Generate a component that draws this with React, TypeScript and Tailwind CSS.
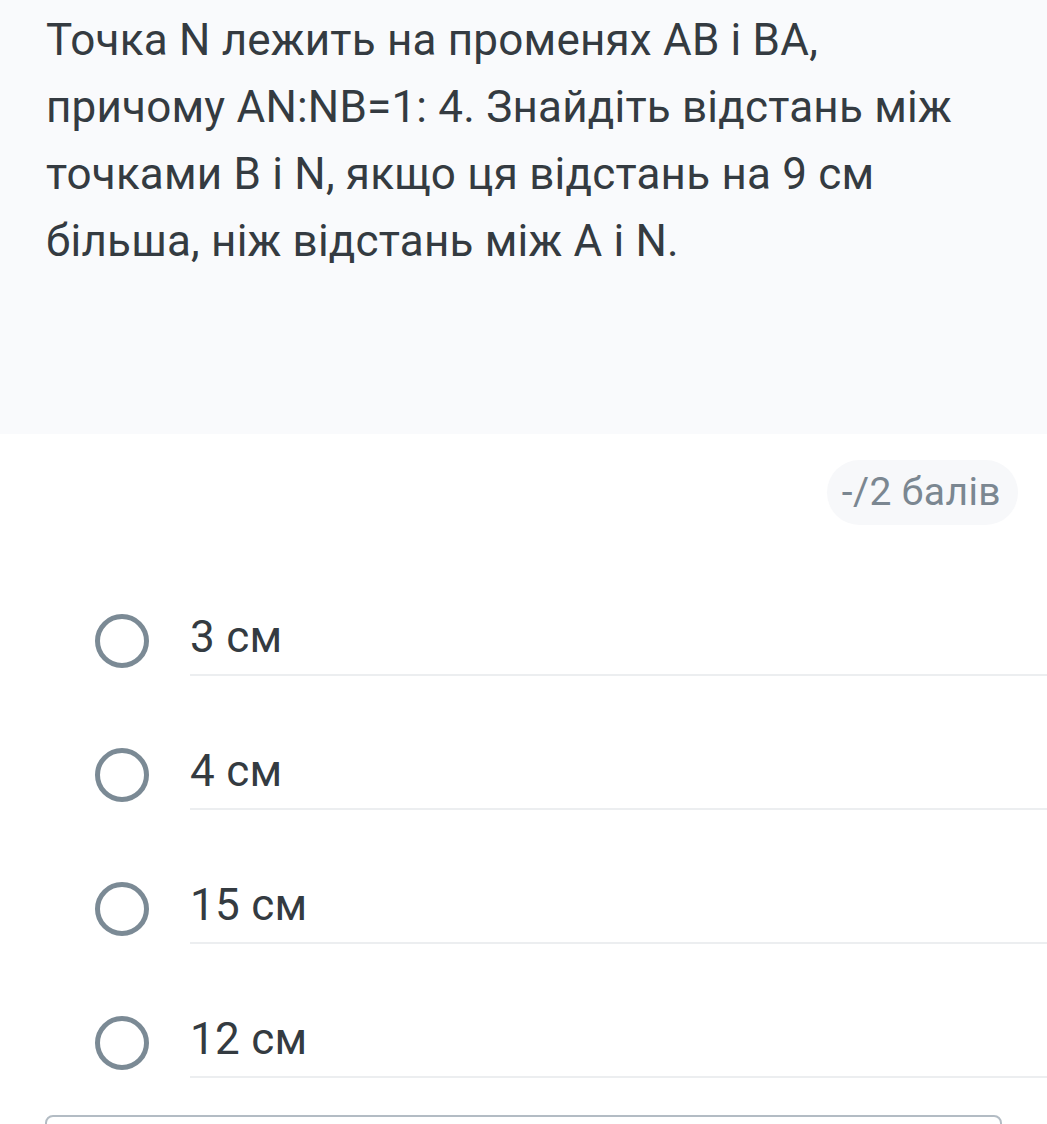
const options = ['3 см', '4 см', '15 см', '12 см'];

function Radio() {
  return (
    <span className="mb-[8px] ml-[95px] block h-[54px] w-[54px] shrink-0 rounded-full border-[5px] border-[#7b8a95]" />
  );
}

export default function App() {
  return (
    <div className="min-h-[1124px] w-full overflow-hidden bg-white font-['Roboto',sans-serif]">
      <div className="h-[434px] bg-[#f9fafc] pl-[46px] pr-[70px] pt-[7px]">
        <p className="text-[44px] leading-[67px] tracking-[0.2px] text-[#343b41]">
          Точка N лежить на променях AB і BA, причому AN:NB=1: 4. Знайдіть відстань між точками B і N,
          якщо ця відстань на 9 см більша, ніж відстань між A і N.
        </p>
      </div>

      <div className="mt-[26px] flex justify-end pr-[29px]">
        <span className="flex h-[65px] items-center rounded-full bg-[#f7f8fa] pl-[15px] pr-[17px] text-[39px] tracking-[0.4px] text-[#7b8791]">
          -/2 балів
        </span>
      </div>

      <div className="mt-[17px]">
        {options.map((o) => (
          <div key={o} className="flex h-[134px] items-end">
            <Radio />
            <div className="ml-[41px] flex-1 border-b-2 border-[#eceef0] pb-[12px] text-[44px] leading-[50px] tracking-[0.3px] text-[#343b41]">
              {o}
            </div>
          </div>
        ))}
      </div>

      <div className="mx-[45px] mt-[37px] h-[60px] rounded-[8px] border-2 border-[#b3bcc4]" />
    </div>
  );
}
